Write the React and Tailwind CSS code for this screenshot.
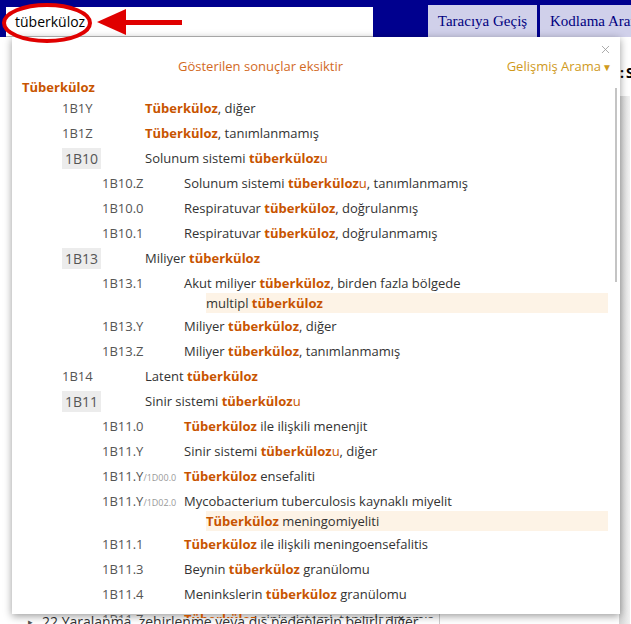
import { X } from 'lucide-react'

// search result rows: segments are [text, style] where b = bold orange, o = orange
const rows = [
  { lvl: 1, code: '1B1Y', t: [['Tüberküloz', 'b'], [', diğer']] },
  { lvl: 1, code: '1B1Z', t: [['Tüberküloz', 'b'], [', tanımlanmamış']] },
  { lvl: 1, code: '1B10', box: true, t: [['Solunum sistemi '], ['tüberküloz', 'b'], ['u', 'o']] },
  { lvl: 2, code: '1B10.Z', t: [['Solunum sistemi '], ['tüberküloz', 'b'], ['u', 'o'], [', tanımlanmamış']] },
  { lvl: 2, code: '1B10.0', t: [['Respiratuvar '], ['tüberküloz', 'b'], [', doğrulanmış']] },
  { lvl: 2, code: '1B10.1', t: [['Respiratuvar '], ['tüberküloz', 'b'], [', doğrulanmamış']] },
  { lvl: 1, code: '1B13', box: true, t: [['Miliyer '], ['tüberküloz', 'b']] },
  {
    lvl: 2, code: '1B13.1',
    t: [['Akut miliyer '], ['tüberküloz', 'b'], [', birden fazla bölgede']],
    sub: [['multipl '], ['tüberküloz', 'b']],
  },
  { lvl: 2, code: '1B13.Y', t: [['Miliyer '], ['tüberküloz', 'b'], [', diğer']] },
  { lvl: 2, code: '1B13.Z', t: [['Miliyer '], ['tüberküloz', 'b'], [', tanımlanmamış']] },
  { lvl: 1, code: '1B14', t: [['Latent '], ['tüberküloz', 'b']] },
  { lvl: 1, code: '1B11', box: true, t: [['Sinir sistemi '], ['tüberküloz', 'b'], ['u', 'o']] },
  { lvl: 2, code: '1B11.0', t: [['Tüberküloz', 'b'], [' ile ilişkili menenjit']] },
  { lvl: 2, code: '1B11.Y', t: [['Sinir sistemi '], ['tüberküloz', 'b'], ['u', 'o'], [', diğer']] },
  { lvl: 2, code: '1B11.Y', ext: '/1D00.0', t: [['Tüberküloz', 'b'], [' ensefaliti']] },
  {
    lvl: 2, code: '1B11.Y', ext: '/1D02.0',
    t: [['Mycobacterium tuberculosis kaynaklı miyelit']],
    sub: [['Tüberküloz', 'b'], [' meningomiyeliti']],
  },
  { lvl: 2, code: '1B11.1', t: [['Tüberküloz', 'b'], [' ile ilişkili meningoensefalitis']] },
  { lvl: 2, code: '1B11.3', t: [['Beynin '], ['tüberküloz', 'b'], [' granülomu']] },
  { lvl: 2, code: '1B11.4', t: [['Meninkslerin '], ['tüberküloz', 'b'], [' granülomu']] },
  { lvl: 2, code: '1B11.Z', t: [['Tüberküloz', 'b'], [' sinir sistemi, tanımlanmamış']] },
]

function Segs({ segs }) {
  return segs.map(([text, s], i) => (
    <span
      key={i}
      className={s === 'b' ? 'font-bold text-[#c85400]' : s === 'o' ? 'text-[#c85400]' : ''}
    >
      {text}
    </span>
  ))
}

function Row({ r }) {
  const pad = r.lvl === 1 ? 'pl-[50px]' : 'pl-[90px]'
  return (
    <div className={r.sub ? 'pt-[3px] pb-[1px]' : 'py-[3px]'}>
      <div className={`flex h-[19px] items-center ${pad}`}>
        <div className={r.lvl === 1 ? 'w-[83px] shrink-0' : 'w-[82px] shrink-0'}>
          {r.box ? (
            <span className="inline-block bg-[#ececec] px-[3px] py-[1px] text-[14px] leading-[19px] text-[#555]">
              {r.code}
            </span>
          ) : (
            <span className="text-[#555]">
              {r.code}
              {r.ext && <span className="text-[9px] text-[#999]">{r.ext}</span>}
            </span>
          )}
        </div>
        <div className="whitespace-nowrap text-[#333]">
          <Segs segs={r.t} />
        </div>
      </div>
      {r.sub && (
        <div className="ml-[194px] mr-[12px] h-[20px] bg-[#fdf3e6] leading-[20px] whitespace-nowrap text-[#333]">
          <Segs segs={r.sub} />
        </div>
      )}
    </div>
  )
}

export default function App() {
  return (
    <div className="relative h-[624px] w-[631px] overflow-hidden bg-white font-['Open_Sans',sans-serif] text-[13px]">
      {/* header bar */}
      <div className="flex h-[37px] items-end bg-[#00008e]">
        <div className="ml-[6px] flex h-[30px] w-[367px] shrink-0 items-center border-b border-[#bbb] bg-white pl-[9px] text-[14px] text-black">
          tüberküloz
        </div>
        <div className="ml-[55px] flex h-[32px] w-[109px] shrink-0 items-center justify-center bg-[#d0d0ea] font-['Liberation_Serif',serif] text-[15px] text-[#000080]">
          Taracıya Geçiş
        </div>
        <div className="ml-[3px] flex h-[32px] w-[120px] shrink-0 items-center whitespace-nowrap bg-[#d0d0ea] pl-[10px] font-['Liberation_Serif',serif] text-[15px] text-[#000080]">
          Kodlama Arama
        </div>
      </div>

      {/* page behind the dropdown */}
      <div className="flex h-[587px]">
        <div className="w-[440px] shrink-0 border-r border-[#ccc]" />
        <div className="flex w-[190px] shrink-0 flex-col">
          <div className="mt-[25px] flex h-[20px] gap-[2px] whitespace-nowrap pl-[180px] text-[14px] font-bold text-black">
            <span>:</span>
            <span>Sonuç</span>
          </div>
          <div className="ml-auto mt-[14px] w-[11px] flex-1 bg-gradient-to-r from-[#d4d4d4] to-[#f2f2f2]" />
        </div>
      </div>
      <div className="absolute left-[28px] top-[611px] flex items-center gap-[9px] whitespace-nowrap text-[14px] text-[#333]">
        <span className="text-[9px] text-[#555]">▸</span>
        <span>22 Yaralanma, zehirlenme veya dış nedenlerin belirli diğer</span>
      </div>

      {/* search dropdown */}
      <div className="absolute left-[12px] top-[37px] h-[577px] w-[608px] bg-white shadow-[0_2px_8px_rgba(0,0,0,0.4)]">
        <X className="absolute right-[8px] top-[6px] h-[13px] w-[13px] text-[#999]" strokeWidth={1.5} />
        <div className="absolute right-[3px] top-[51px] h-[194px] w-[2px] bg-[#c4c4c4]" />
        <div className="mt-[20px] flex h-[20px] items-center">
          <div className="w-[331px] text-right text-[#d2691e]">Gösterilen sonuçlar eksiktir</div>
          <div className="ml-auto mr-[8px] flex items-center text-[#d09a1c]">
            Gelişmiş Arama<span className="ml-[1px] text-[10px]">▼</span>
          </div>
        </div>
        <div className="mt-[1px] h-[18px] pl-[10px] font-bold leading-[18px] text-[#c85400]">Tüberküloz</div>
        <div className="h-[522px] overflow-hidden">
          {rows.map((r, i) => (
            <Row key={i} r={r} />
          ))}
        </div>
      </div>

      {/* annotation: circle and arrow */}
      <svg className="absolute left-0 top-0" width="200" height="50" viewBox="0 0 200 50">
        <ellipse cx="47" cy="23" rx="43" ry="18" fill="none" stroke="#e00000" strokeWidth="4" />
        <polygon points="97,22 126,9 126,35" fill="#e00000" />
        <rect x="124" y="20" width="58" height="5" fill="#e00000" />
      </svg>
    </div>
  )
}
